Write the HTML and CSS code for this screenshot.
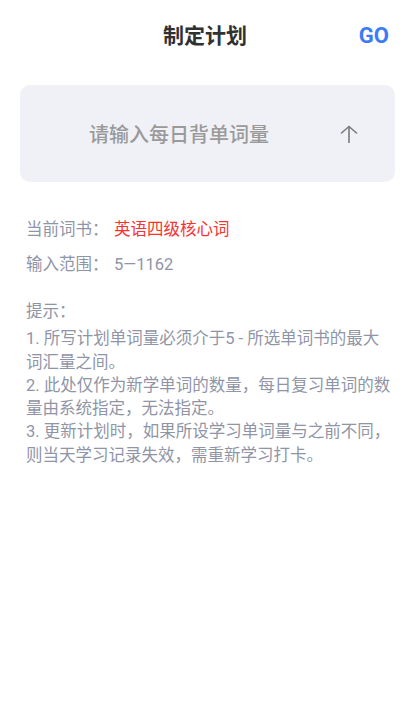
FILE: index.html
```html
<!DOCTYPE html>
<html lang="zh-CN">
<head>
<meta charset="utf-8">
<title>制定计划</title>
<link rel="stylesheet" href="styles.css">
</head>
<body>
<div class="page">
  <header class="header">
    <div class="spacer"></div>
    <h1 class="title">制定计划</h1>
    <a class="go">GO</a>
  </header>

  <div class="input-box">
    <div class="placeholder">请输入每日背单词量</div>
    <svg class="arrow" width="18" height="18" viewBox="0 0 18 18" fill="none" stroke="#7a7a7a" stroke-width="1.6" stroke-linecap="round" stroke-linejoin="round">
      <path d="M9 1.5 V17.5"/>
      <path d="M1.5 8 L9 1.5 L16.5 8"/>
    </svg>
  </div>

  <section class="info">
    <div class="row"><span class="label">当前词书：</span><span class="book">英语四级核心词</span></div>
    <div class="row"><span class="label">输入范围：</span><span class="value">5—1162</span></div>
  </section>

  <section class="tips">
    <div class="tips-title">提示：</div>
    <p class="tip">1. 所写计划单词量必须介于5 - 所选单词书的最大词汇量之间。</p>
    <p class="tip">2. 此处仅作为新学单词的数量，每日复习单词的数量由系统指定，无法指定。</p>
    <p class="tip">3. 更新计划时，如果所设学习单词量与之前不同，则当天学习记录失效，需重新学习打卡。</p>
  </section>
</div>
</body>
</html>
```

FILE: styles.css
```css
* { box-sizing: border-box; }
html, body {
  margin: 0;
  padding: 0;
  background: #ffffff;
}
body {
  font-family: Roboto, "Noto Sans CJK SC", sans-serif;
  width: 410px;
  height: 714px;
}
.page {
  display: flex;
  flex-direction: column;
}
.header {
  height: 72px;
  display: grid;
  grid-template-columns: 1fr auto 1fr;
  align-items: center;
}
.title {
  margin: 0;
  font-size: 21px;
  font-weight: 700;
  color: #303133;
  line-height: 1;
}
.go {
  justify-self: end;
  padding-right: 21px;
  font-family: Roboto, sans-serif;
  font-weight: 700;
  font-size: 22px;
  color: #3b7cf6;
  line-height: 1;
}
.input-box {
  margin: 13px 15px 0 20px;
  height: 97px;
  background: #f0f1f6;
  border-radius: 10px;
  display: flex;
  align-items: center;
  padding-right: 37px;
}
.placeholder {
  flex: 1;
  text-align: center;
  font-size: 20px;
  color: #9a9a9a;
  font-weight: 500;
}
.arrow {
  margin-left: 2px;
  flex: none;
}
.info {
  margin-top: 30px;
  padding: 0 26px;
}
.row {
  line-height: 35px;
  font-size: 16.5px;
  display: flex;
}
.label {
  color: #8f95a6;
  width: 88px;
}
.book { color: #fa3232; }
.value { color: #8f95a6; }
.tips {
  margin-top: 18px;
  padding: 0 19px 0 26px;
  color: #8f95a6;
  font-size: 16.5px;
  line-height: 23.3px;
}
.tips-title { margin-bottom: 4px; }
.tip { margin: 0; }
```
